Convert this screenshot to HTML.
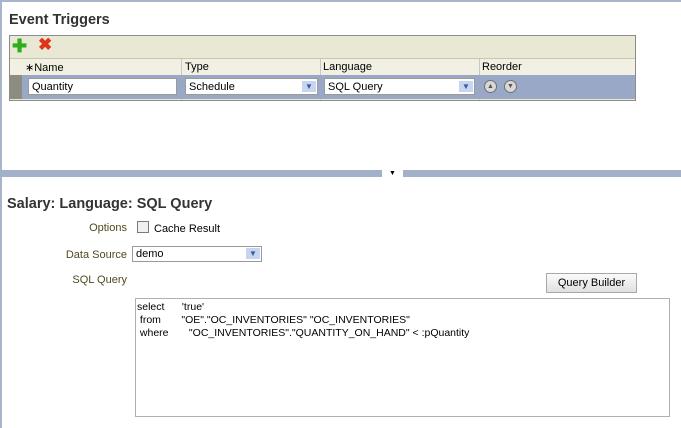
<!DOCTYPE html>
<html><head><style>
body{margin:0;width:681px;height:428px;background:#fff;font-family:"Liberation Sans",Arial,sans-serif;font-size:11px;position:relative;overflow:hidden;color:#000}
.a{position:absolute}
h1{position:absolute;margin:0;font-size:14.5px;font-weight:bold;color:#333}
.lbl{position:absolute;color:#4f4a1d;text-align:right;width:120px}
.sel{position:absolute;background:#fff;border:1px solid #9a9a9a;height:15px;box-sizing:border-box}
.sel span{position:absolute;left:3px;top:0px}
.dd{position:absolute;right:1px;top:1px;width:14px;height:11px;background:#c7d5f0;color:#3b5aa0;font-size:8px;text-align:center;line-height:11px}
</style></head><body>
<div class="a" style="left:0;top:0;width:681px;height:2px;background:#a8b4c8"></div>
<div class="a" style="left:0;top:0;width:2px;height:428px;background:#a8b4c8"></div>
<h1 style="left:9px;top:12px">Event Triggers</h1>
<div class="a" style="left:9px;top:35px;width:625px;height:64px;border:1px solid #8c8c8c;background:#e9e8d4"></div>
<div class="a" style="left:12px;top:37px;font-size:18px;font-weight:bold;color:#2fae1c;line-height:18px">✚</div>
<div class="a" style="left:38px;top:36px;font-size:17px;font-weight:bold;color:#e0341a;line-height:18px">✖</div>
<div class="a" style="left:10px;top:58px;width:625px;height:16px;background:#f2f0e2;border-top:1px solid #c8c6b0;border-bottom:1px solid #b8b8b8"></div>
<div class="a" style="left:25px;top:61px">∗Name</div>
<div class="a" style="left:185px;top:61px">Type</div>
<div class="a" style="left:323px;top:61px">Language</div>
<div class="a" style="left:482px;top:61px">Reorder</div>
<div class="a" style="left:181px;top:59px;width:1px;height:41px;background:#c8c8c8"></div>
<div class="a" style="left:320px;top:59px;width:1px;height:41px;background:#c8c8c8"></div>
<div class="a" style="left:479px;top:59px;width:1px;height:41px;background:#c8c8c8"></div>
<div class="a" style="left:10px;top:75px;width:625px;height:24px;background:#9aa8c8"></div>
<div class="a" style="left:10px;top:75px;width:12px;height:24px;background:#8c8c80"></div>
<div class="sel" style="left:28px;top:78px;width:149px;height:17px"><span style="top:2px">Quantity</span></div>
<div class="sel" style="left:185px;top:78px;width:133px;height:17px"><span style="top:2px">Schedule</span><div class="dd" style="top:2px">▼</div></div>
<div class="sel" style="left:324px;top:78px;width:151px;height:17px"><span style="top:2px">SQL Query</span><div class="dd" style="top:2px">▼</div></div>
<div class="a" style="left:484px;top:80px;width:13px;height:13px;border-radius:50%;background:#d8d8d8;border:1px solid #707070;box-sizing:border-box;font-size:7px;text-align:center;line-height:11px;color:#555">▲</div>
<div class="a" style="left:504px;top:80px;width:13px;height:13px;border-radius:50%;background:#d8d8d8;border:1px solid #707070;box-sizing:border-box;font-size:7px;text-align:center;line-height:11px;color:#555">▼</div>
<div class="a" style="left:0;top:170px;width:681px;height:7px;background:#a2b0c8"></div>
<div class="a" style="left:382px;top:170px;width:21px;height:7px;background:#fff;font-size:7px;text-align:center;line-height:7px">▼</div>
<h1 style="left:7px;top:196px">Salary: Language: SQL Query</h1>
<div class="lbl" style="left:7px;top:222px">Options</div>
<div class="a" style="left:137px;top:221px;width:12px;height:12px;border:1px solid #7a7a7a;box-sizing:border-box;background:#f0f0f0"></div>
<div class="a" style="left:154px;top:223px">Cache Result</div>
<div class="lbl" style="left:7px;top:249px">Data Source</div>
<div class="sel" style="left:132px;top:246px;width:130px;height:16px"><span style="top:1px">demo</span><div class="dd">▼</div></div>
<div class="lbl" style="left:7px;top:274px">SQL Query</div>
<div class="a" style="left:546px;top:273px;width:91px;height:20px;border:1px solid #a8a8a8;box-sizing:border-box;background:linear-gradient(#fbfbfb,#e0e0e0);text-align:center;line-height:18px">Query Builder</div>
<div class="a" style="left:135px;top:298px;width:535px;height:119px;border:1px solid #b0b0b0;box-sizing:border-box"></div>
<div class="a" style="left:137px;top:301px;line-height:13px;white-space:pre;font-size:10.5px">select      'true'
 from       "OE"."OC_INVENTORIES" "OC_INVENTORIES"
 where       "OC_INVENTORIES"."QUANTITY_ON_HAND" &lt; :pQuantity</div>
</body></html>
